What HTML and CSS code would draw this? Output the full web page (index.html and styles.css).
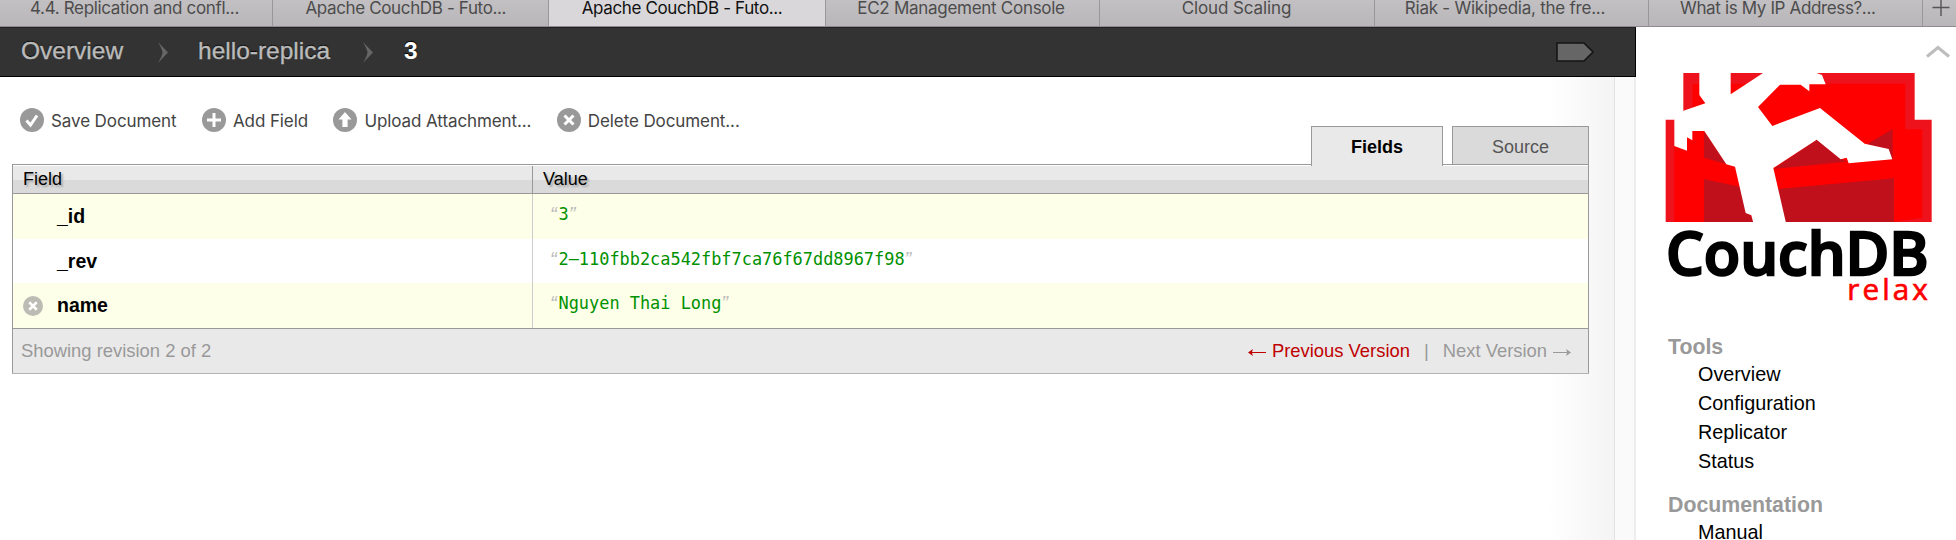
FILE: index.html
```html
<!DOCTYPE html>
<html lang="en">
<head>
<meta charset="utf-8">
<title>Apache CouchDB - Futon</title>
<link rel="stylesheet" href="styles.css">
</head>
<body>
<nav class="browser-tabs">
  <div class="btab first">4.4. Replication and confl...</div>
  <div class="btab couch">Apache CouchDB - Futo...</div>
  <div class="btab couch current">Apache CouchDB - Futo...</div>
  <div class="btab ec2">EC2 Management Console</div>
  <div class="btab">Cloud Scaling</div>
  <div class="btab riak">Riak - Wikipedia, the fre...</div>
  <div class="btab ip">What is My IP Address?...</div>
  <div class="newtab"><svg width="18" height="18" viewBox="0 0 18 18"><path d="M9 0V16M0.5 7.5H17.5" stroke="#555" stroke-width="1.4"/></svg></div>
</nav>
<div class="page">
  <main class="main">
    <header class="crumbs">
      <a class="crumb overview">Overview</a>
      <svg class="sep" width="12" height="21" viewBox="0 0 12 21"><path d="M1 0L11 10.5L1 21Q5 14 5.5 10.5Q5 7 1 0Z" fill="#666"/></svg>
      <a class="crumb replica">hello-replica</a>
      <svg class="sep" width="12" height="21" viewBox="0 0 12 21"><path d="M1 0L11 10.5L1 21Q5 14 5.5 10.5Q5 7 1 0Z" fill="#666"/></svg>
      <strong class="crumb here">3</strong>
      <svg class="tag" width="40" height="22" viewBox="0 0 40 22"><path d="M2 2H29L38 11L29 20H2Z" fill="#666" stroke="#141414" stroke-width="1.6"/></svg>
    </header>
    <div class="content">
      <section class="document">
        <div class="toolbar">
          <ul class="actions">
            <li class="save"><svg class="ico" viewBox="0 0 24 24"><circle cx="12" cy="12" r="12"/><path d="M6.5 12.5L10.5 17L17 7.5"/></svg>Save Document</li>
            <li class="add"><svg class="ico" viewBox="0 0 24 24"><circle cx="12" cy="12" r="12"/><path d="M12 5V19M5 12H19"/></svg>Add Field</li>
            <li class="upload"><svg class="ico" viewBox="0 0 24 24"><circle cx="12" cy="12" r="12"/><path class="solid" d="M12 4L18.5 11.5H14.6V19H9.4V11.5H5.5Z"/></svg>Upload Attachment...</li>
            <li class="delete"><svg class="ico" viewBox="0 0 24 24"><circle cx="12" cy="12" r="12"/><path d="M7.5 7.5L16.5 16.5M16.5 7.5L7.5 16.5"/></svg>Delete Document...</li>
          </ul>
          <div class="views"><a class="view active">Fields</a><a class="view">Source</a></div>
        </div>
        <div class="fields">
          <div class="row head"><div class="name">Field</div><div class="value">Value</div></div>
          <div class="row odd"><div class="name">_id</div><div class="value"><i>“</i><code>3</code><i>”</i></div></div>
          <div class="row"><div class="name">_rev</div><div class="value"><i>“</i><code>2–110fbb2ca542fbf7ca76f67dd8967f98</code><i>”</i></div></div>
          <div class="row odd"><div class="name"><svg class="ico remove" viewBox="0 0 24 24"><circle cx="12" cy="12" r="12"/><path d="M7.5 7.5L16.5 16.5M16.5 7.5L7.5 16.5"/></svg>name</div><div class="value"><i>“</i><code>Nguyen Thai Long</code><i>”</i></div></div>
          <div class="foot">
            <span class="status">Showing revision 2 of 2</span>
            <a class="prev"><svg class="arrow" viewBox="0 0 18 10"><path d="M18 6.5H3" fill="none" stroke="currentColor"/><path d="M0 6.5L5 3L3.8 6.5L5 10Z" fill="currentColor"/></svg>Previous Version</a>
            <span class="bar">|</span>
            <span class="next">Next Version<svg class="arrow" viewBox="0 0 18 10"><path d="M0 6.5H15" fill="none" stroke="currentColor"/><path d="M18 6.5L13 3L14.2 6.5L13 10Z" fill="currentColor"/></svg></span>
          </div>
        </div>
      </section>
      <div class="gutter"></div>
    </div>
  </main>
  <aside class="sidebar">
    <div class="collapse"><svg width="26" height="14" viewBox="0 0 26 14"><path d="M2 11.5L13 2.5L24 11.5" fill="none" stroke="#bdbdbd" stroke-width="3"/></svg></div>
    <svg class="logo" width="270" height="235" viewBox="75 37 810 705">
      <path fill="#ed121b" d="M130 40H824V180H875V487H77V180H130Z"/>
      <path fill="#f00" d="M158 72H796V209H847V474L762 487H103V209H158Z"/>
      <path fill="#bf101c" d="M192 214L260 314L192 294ZM192 358L298 381L340 487H192ZM400 328L530 240L604 298L620 306ZM684 252L758 208V300ZM410 388L762 356V487H430Z"/>
      <path fill="#fff" d="M178 36H272V104L368 41V36H520L546 46L557 74H508V95L482 75H420L354 142L397 199L540 145L674 252L746 268L757 299L626 311L620 294L602 299L530 240L400 325L438 490H340L334 467L317 460L285 321L259 314L193 214H157V242L141 233V273L103 259V180L128 154L196 131L178 106Z"/>
      <text class="brand" x="78" y="647" textLength="788" lengthAdjust="spacingAndGlyphs">CouchDB</text>
      <text class="motto" x="622" y="721" textLength="241">relax</text>
    </svg>
    <h2>Tools</h2>
    <ul><li>Overview</li><li>Configuration</li><li>Replicator</li><li>Status</li></ul>
    <h2>Documentation</h2>
    <ul><li>Manual</li></ul>
  </aside>
</div>
</body>
</html>
```
FILE: styles.css
```css
* { box-sizing: border-box; }
body {
  margin: 0;
  height: 540px;
  overflow: hidden;
  background: #fff;
  font-family: "Liberation Sans", Arial, sans-serif;
  color: #000;
}
ul { list-style: none; margin: 0; padding: 0; }
svg { display: block; flex: none; }

.browser-tabs {
  display: grid;
  grid-template-columns: 273px 275.5px 277px 274px 275px 274px 274.5px 33px;
  height: 27px;
  border-bottom: 1px solid #8d8b8d;
  background: linear-gradient(#c2c0c2, #b8b6b8);
  font: 17px/17px Inter, sans-serif;
  letter-spacing: -0.1px;
  color: #4d4c4d;
}
.btab {
  border-right: 1px solid #999799;
  text-align: center;
  white-space: nowrap;
}
.btab.first { letter-spacing: -0.33px; padding-right: 3px; }
.btab.couch { letter-spacing: -0.36px; padding-right: 9px; }
.btab.ec2 { letter-spacing: -0.28px; padding-right: 2px; }
.btab.riak { letter-spacing: -0.24px; padding-right: 12px; }
.btab.ip { letter-spacing: -0.36px; padding-right: 15px; }
.btab.current { background: #d9d7d9; color: #111; }
.newtab { padding-left: 9px; }

.page { display: flex; height: 513px; }
.main { width: 1636px; display: flex; flex-direction: column; }
.crumbs {
  display: flex;
  align-items: center;
  height: 50px;
  padding: 0 40px 0 21px;
  background: #333;
  border-top: 1px solid #222;
  border-bottom: 1px solid #000;
  border-right: 1px solid #000;
  font-size: 24.5px;
  color: #bbb;
  text-shadow: 0 -1px 1px #000;
  -webkit-text-stroke: 0.4px currentColor;
}
.crumb { padding-bottom: 3px; white-space: nowrap; }
.overview { width: 136px; }
.replica { width: 164px; margin-left: 29px; }
.here { margin-left: 30px; color: #fff; -webkit-text-stroke: 0; }
.tag { margin-left: auto; }

.content { display: flex; flex: 1; }
.document {
  width: 1615px;
  padding: 0 25px 0 12px;
  border-right: 1px solid #e2e2e2;
  background: linear-gradient(90deg, #fff 1547px, #f4f4f4 1614px);
}
.gutter { flex: 1; background: #fafafa; border-right: 2px solid #eee; }
.toolbar { display: flex; justify-content: space-between; height: 87px; }
.actions {
  display: flex;
  padding: 31px 0 0 8px;
  font: 17px/26px Inter, sans-serif;
  letter-spacing: -0.1px;
  color: #444;
}
.actions li { display: flex; gap: 7px; margin-right: 25.5px; white-space: nowrap; height: 24px; }
.ico { width: 24px; height: 24px; fill: #999; }
.ico path { fill: none; stroke: #fff; stroke-width: 3; }
.ico .solid { fill: #fff; stroke: none; }
.views { display: flex; gap: 9px; padding-top: 49px; }
.view {
  width: 137px;
  height: 38px;
  padding-top: 2px;
  border: 1px solid #999;
  border-bottom: 0;
  background: #dadada;
  color: #555;
  font-size: 18px;
  line-height: 37px;
  text-align: center;
}
.view.active {
  width: 132px;
  height: 40px;
  z-index: 1;
  background: #e9e9e9;
  color: #000;
  font-weight: bold;
}
.fields { border: 1px solid #999; border-bottom: 2px solid #b3b3b3; height: 210px; }
.row { display: flex; height: 44.7px; background: #fff; }
.row.odd { background: #feffe8; }
.name {
  display: flex;
  align-items: center;
  width: 520px;
  padding-left: 44px;
  border-right: 1px solid #ccc;
  font-size: 19.5px;
  font-weight: bold;
}
.value { display: flex; align-items: center; padding: 0 0 5px 17px; }
.value code { font: 16.92px/20px "DejaVu Sans Mono", monospace; color: #009100; white-space: pre; }
.value i { width: 8.5px; font-size: 20px; line-height: 20px; color: #bbb; }
.remove { width: 20px; height: 20px; margin: 0 14px 0 -34px; fill: #bcbcb4; }
.row.head {
  height: 29px;
  border-top: 1px solid #fff;
  border-bottom: 1px solid #999;
  background: linear-gradient(#e9e9e9 14px, #dadada 14px);
  text-shadow: 2px 2px 2px #aaa;
}
.head .name { padding-left: 10px; border-color: #999; font-size: 18px; font-weight: normal; }
.head .value { padding: 0 0 0 10px; font-size: 18px; }
.foot {
  display: flex;
  align-items: center;
  height: 44.5px;
  padding: 0 17px 0 8px;
  border-top: 1px solid #999;
  background: #e9e9e9;
  font-size: 18.4px;
  color: #999;
}
.status { margin-right: auto; }
.prev, .next { display: flex; align-items: center; gap: 6px; }
.prev { color: #c00000; }
.arrow { width: 18px; height: 10px; }
.bar { margin: 0 14px; }

.sidebar { flex: 1; padding-left: 29px; }
.collapse { display: flex; justify-content: flex-end; height: 45px; padding: 18px 5px 0 0; }
.logo { overflow: visible; }
.brand { font-family: "Open Sans", sans-serif; font-weight: 600; font-size: 178px; fill: #000; stroke: #000; stroke-width: 7; }
.motto { font-family: "Open Sans", sans-serif; font-size: 89px; fill: #f00; stroke: #f00; stroke-width: 2; }
.sidebar h2 { margin: 28px 0 0 3px; font-size: 21.3px; line-height: 25px; color: #999; }
.sidebar ul + h2 { margin-top: 17px; }
.sidebar li { height: 29px; padding-left: 33px; font-size: 19.8px; line-height: 29px; }
```
